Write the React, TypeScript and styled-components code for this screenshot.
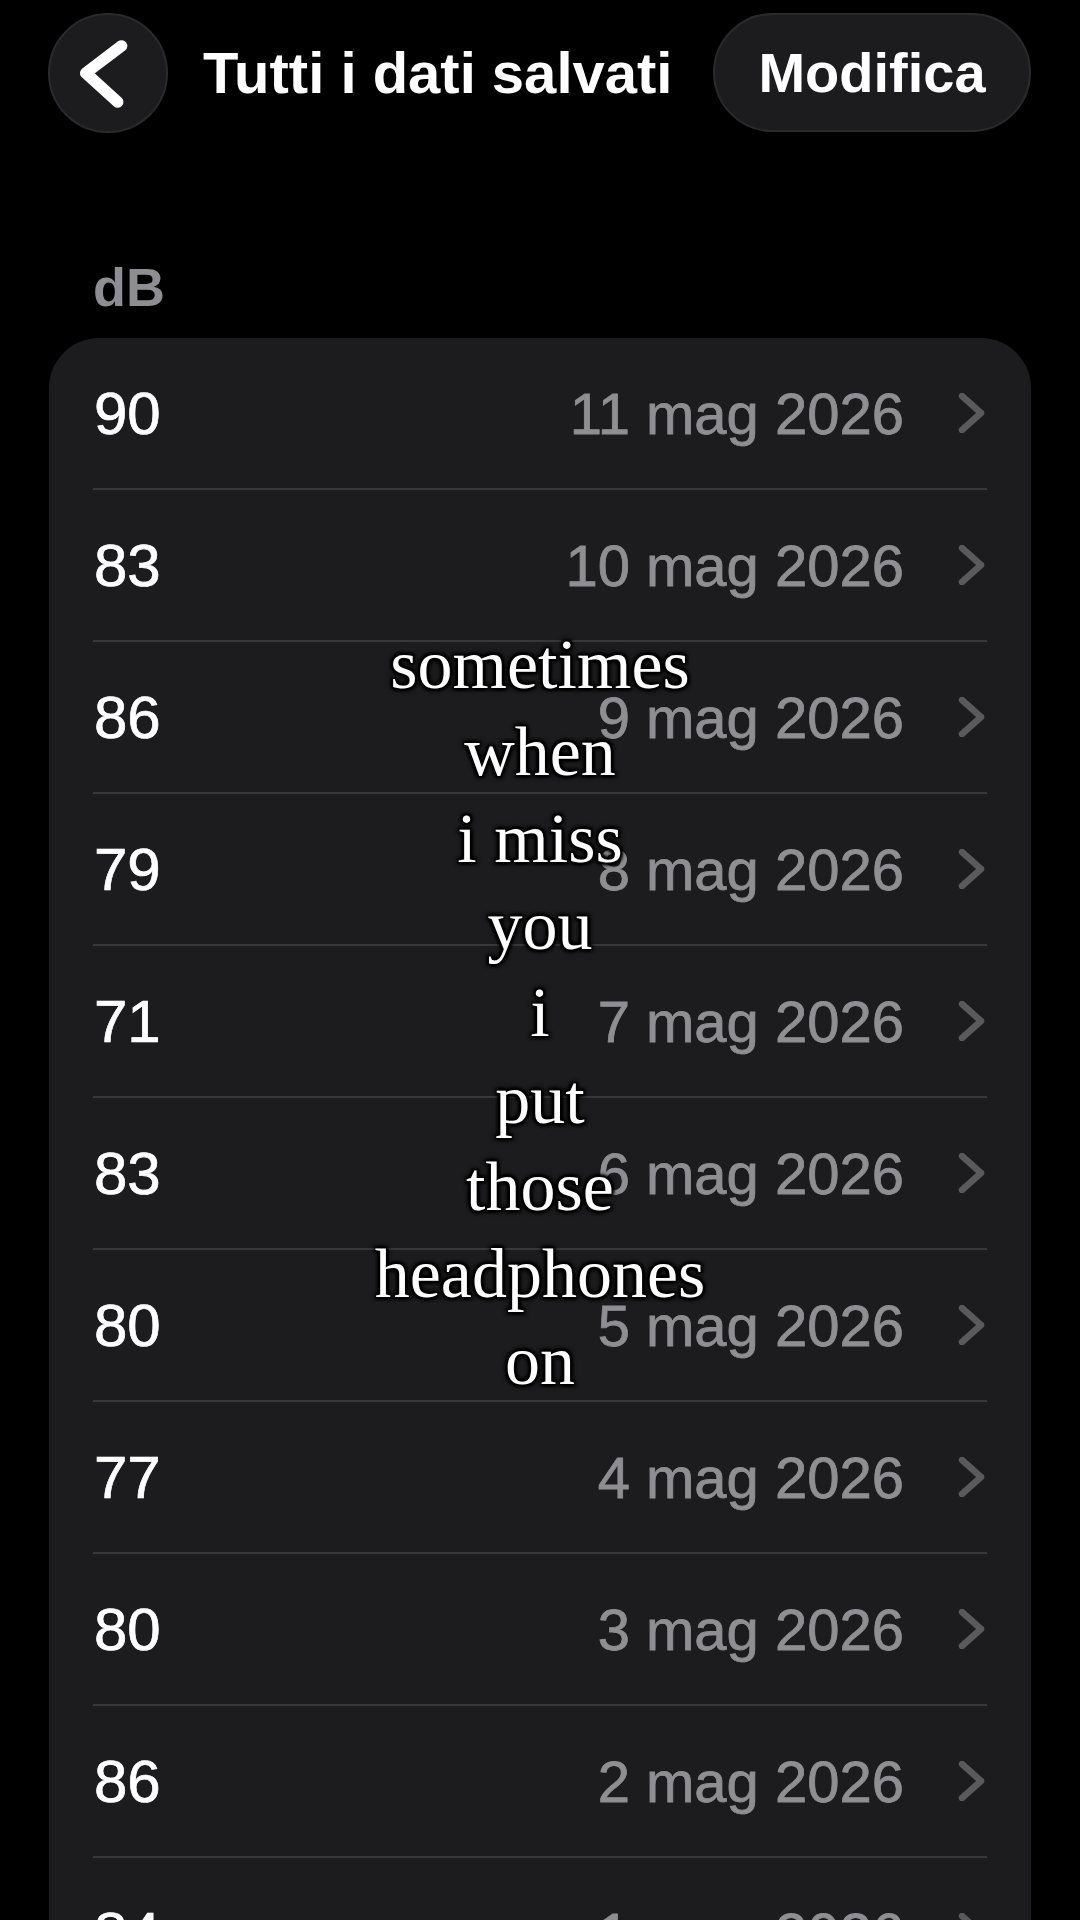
import React from "react";
import styled, { createGlobalStyle } from "styled-components";

const GlobalStyle = createGlobalStyle`
  html, body {
    margin: 0;
    padding: 0;
    background: #000;
  }
  body {
    font-family: "Liberation Sans", Arial, sans-serif;
    -webkit-font-smoothing: antialiased;
  }
`;

const Page = styled.div`
  position: relative;
  width: 1080px;
  height: 1920px;
  overflow: hidden;
  background: #000;
  color: #fff;
  display: flex;
  flex-direction: column;
`;

const Header = styled.header`
  display: flex;
  align-items: center;
  height: 119px;
  padding: 13px 49px 0 48px;
`;

const BackButton = styled.button`
  width: 120px;
  height: 120px;
  flex: none;
  border-radius: 50%;
  background: #1c1c1e;
  border: 2px solid #2a2a2c;
  padding: 0;
  display: flex;
  align-items: center;
  justify-content: center;
  box-sizing: border-box;
`;

const Title = styled.h1`
  flex: 1;
  margin: 0 0 0 35px;
  font-size: 58px;
  font-weight: 700;
  letter-spacing: 0;
  color: #fff;
  white-space: nowrap;
`;

const EditButton = styled.button`
  height: 119px;
  flex: none;
  width: 318px;
  border-radius: 60px;
  background: #1c1c1e;
  border: 2px solid #2a2a2c;
  color: #fff;
  font-family: "Liberation Sans", Arial, sans-serif;
  font-size: 56px;
  font-weight: 700;
  box-sizing: border-box;
  padding: 0;
`;

const SectionLabel = styled.div`
  margin: 128px 0 0 93px;
  font-size: 54px;
  line-height: 54px;
  font-weight: 700;
  color: #8d8d92;
`;

const Card = styled.section`
  margin: 24px 49px 0 49px;
  background: #1c1c1e;
  border-radius: 50px;
  display: flex;
  flex-direction: column;
  flex: none;
`;

const Row = styled.div`
  padding: 0 44px;
`;

const RowContent = styled.div`
  height: 150px;
  border-bottom: 2px solid #38383a;
  display: flex;
  align-items: center;
`;

const Value = styled.span`
  flex: 1;
  font-size: 60px;
  color: #fff;
  -webkit-text-stroke: 0.7px #fff;
  padding-left: 1px;
`;

const DateText = styled.span`
  font-size: 58px;
  color: #8e8e93;
  -webkit-text-stroke: 0.8px #8e8e93;
  margin-right: 53px;
`;

const Chevron = styled.svg`
  width: 30px;
  height: 40px;
  flex: none;
`;

const Lyrics = styled.div`
  position: absolute;
  left: 0;
  right: 0;
  top: 621px;
  display: flex;
  flex-direction: column;
  align-items: center;
  pointer-events: none;
`;

const LyricLine = styled.div`
  font-family: "Liberation Serif", "Times New Roman", serif;
  font-size: 70px;
  line-height: 87px;
  color: #fff;
  white-space: nowrap;
  text-shadow: 0 0 2px #000, 0 0 4px #000, 0 0 6px #000, 2px 2px 3px #000,
    -2px -2px 3px #000, 2px -2px 3px #000, -2px 2px 3px #000;
`;

const rows: [number, number][] = [
  [90, 11],
  [83, 10],
  [86, 9],
  [79, 8],
  [71, 7],
  [83, 6],
  [80, 5],
  [77, 4],
  [80, 3],
  [86, 2],
  [84, 1],
];

const lyrics = [
  "sometimes",
  "when",
  "i miss",
  "you",
  "i",
  "put",
  "those",
  "headphones",
  "on",
];

export default function App() {
  return (
    <>
      <GlobalStyle />
      <Page>
        <Header>
          <BackButton aria-label="Indietro">
            <svg width="120" height="120" viewBox="0 0 120 120">
              <polyline
                points="74,32 37,60 70,90"
                fill="none"
                stroke="#fff"
                strokeWidth="12"
                strokeLinecap="round"
                strokeLinejoin="round"
              />
            </svg>
          </BackButton>
          <Title>Tutti i dati salvati</Title>
          <EditButton>Modifica</EditButton>
        </Header>
        <SectionLabel>dB</SectionLabel>
        <Card>
          {rows.map(([v, d], i) => (
            <Row key={i}>
              <RowContent>
                <Value>{v}</Value>
                <DateText>{d} mag 2026</DateText>
                <Chevron viewBox="0 0 30 40">
                  <polyline
                    points="5,3 24,20 5,37"
                    fill="none"
                    stroke="#5a5a5e"
                    strokeWidth="6.5"
                    strokeLinecap="round"
                    strokeLinejoin="round"
                  />
                </Chevron>
              </RowContent>
            </Row>
          ))}
        </Card>
        <Lyrics>
          {lyrics.map((l, i) => (
            <LyricLine key={i}>{l}</LyricLine>
          ))}
        </Lyrics>
      </Page>
    </>
  );
}
